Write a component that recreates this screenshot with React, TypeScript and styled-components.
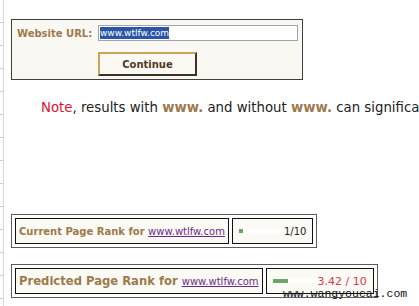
import React from "react";
import styled, { createGlobalStyle } from "styled-components";

const GlobalStyle = createGlobalStyle`
  html, body { margin: 0; padding: 0; background: #ffffff; overflow: hidden; }
  body { font-family: "DejaVu Sans", Verdana, sans-serif; }
`;

const Page = styled.div`
  position: relative;
  display: flex;
  width: 419px;
  height: 306px;
  overflow: hidden;
`;

const LeftRail = styled.div`
  flex: none;
  width: 3px;
  border-right: 1px solid #d6d6d6;
  background: repeating-linear-gradient(
    to bottom,
    transparent 0,
    transparent 22px,
    #cfcfcf 22px,
    #cfcfcf 23px
  );
`;

const Main = styled.main`
  flex: 1;
  min-width: 0;
  padding: 19px 0 0 7px;
  display: flex;
  flex-direction: column;
  align-items: flex-start;
`;

const UrlForm = styled.form`
  display: grid;
  grid-template-columns: 75px 200px;
  column-gap: 6px;
  row-gap: 11px;
  align-items: center;
  margin: 0;
  padding: 5px 4px 3px 5px;
  border: 1px solid #404040;
  background: #faf8f3;
`;

const Label = styled.span`
  font-size: 10px;
  font-weight: bold;
  color: #9b7a4c;
  white-space: nowrap;
`;

const UrlField = styled.div`
  box-sizing: border-box;
  height: 16px;
  display: flex;
  align-items: center;
  padding-left: 1px;
  border: 1px solid #a5a5a5;
  background: #ffffff;
`;

const Selected = styled.span`
  font-size: 9px;
  line-height: 12px;
  background: #2b56a8;
  color: #ffffff;
  white-space: nowrap;
`;

const ContinueButton = styled.button`
  grid-column: 2;
  justify-self: start;
  box-sizing: border-box;
  width: 99px;
  height: 24px;
  padding: 0;
  border: 2px solid;
  border-color: #c9a55c #3b3222 #3b3222 #c9a55c;
  background: #fbf9f4;
  font-family: "DejaVu Sans", Verdana, sans-serif;
  font-size: 10px;
  font-weight: bold;
  color: #4e3a1e;
`;

const Note = styled.p`
  margin: 20px 0 0 30px;
  font-size: 13.3px;
  line-height: 16px;
  color: #222222;
  white-space: nowrap;
`;

const NoteRed = styled.span`
  color: #e01030;
`;

const NoteStrong = styled.b`
  color: #9b7a4c;
`;

const RankTable = styled.div<{ $top: number }>`
  display: flex;
  gap: 3px;
  margin-top: ${(p) => p.$top}px;
  padding: 3px;
  border: 1px solid #5c5c5c;
`;

const Cell = styled.div`
  box-sizing: border-box;
  height: 26px;
  display: flex;
  align-items: center;
  padding: 0 3px;
  border: 1px solid #111111;
  background: #fcfaf5;
  white-space: nowrap;
`;

const ScoreCell = styled(Cell)`
  padding: 0 6px;
`;

const Heading = styled.span<{ $size: number }>`
  font-size: ${(p) => p.$size}px;
  font-weight: bold;
  color: #9b7a4c;
  margin-right: 0.35em;
`;

const SiteLink = styled.a`
  font-size: 10px;
  color: #6a2c8c;
  text-decoration: underline;
`;

const Track = styled.div`
  width: 44px;
  height: 4px;
  background: #ffffff;
  display: flex;
`;

const Fill = styled.div`
  height: 4px;
  background: #6aa56a;
`;

const Score = styled.span<{ $size: number; $color: string }>`
  margin-left: 1px;
  font-size: ${(p) => p.$size}px;
  color: ${(p) => p.$color};
`;

const Watermark = styled.span`
  position: absolute;
  left: 283px;
  top: 287px;
  font-family: "Liberation Mono", "Courier New", monospace;
  font-size: 11.5px;
  color: #111111;
  white-space: nowrap;
`;

type RankProps = {
  top: number;
  title: string;
  titleSize: number;
  value: number;
  scoreText: string;
  scoreSize: number;
  scoreColor: string;
};

function RankRow({ top, title, titleSize, value, scoreText, scoreSize, scoreColor }: RankProps) {
  return (
    <RankTable $top={top}>
      <Cell>
        <Heading $size={titleSize}>{title}</Heading>
        <SiteLink href="#">www.wtlfw.com</SiteLink>
      </Cell>
      <ScoreCell>
        <Track>
          <Fill style={{ width: `${(value / 10) * 44}px` }} />
        </Track>
        <Score $size={scoreSize} $color={scoreColor}>
          {scoreText}
        </Score>
      </ScoreCell>
    </RankTable>
  );
}

export default function App() {
  return (
    <Page>
      <GlobalStyle />
      <LeftRail />
      <Main>
        <UrlForm onSubmit={(e) => e.preventDefault()}>
          <Label>Website URL:</Label>
          <UrlField>
            <Selected>www.wtlfw.com</Selected>
          </UrlField>
          <ContinueButton type="submit">Continue</ContinueButton>
        </UrlForm>
        <Note>
          <NoteRed>Note</NoteRed>, results with <NoteStrong>www.</NoteStrong> and without{" "}
          <NoteStrong>www.</NoteStrong> can significantly differ.
        </Note>
        <RankRow
          top={98}
          title="Current Page Rank for"
          titleSize={10}
          value={1}
          scoreText="1/10"
          scoreSize={10}
          scoreColor="#222222"
        />
        <RankRow
          top={16}
          title="Predicted Page Rank for"
          titleSize={11.6}
          value={3.42}
          scoreText="3.42 / 10"
          scoreSize={11}
          scoreColor="#d63a4a"
        />
      </Main>
      <Watermark>www.wangyoucai.com</Watermark>
    </Page>
  );
}
